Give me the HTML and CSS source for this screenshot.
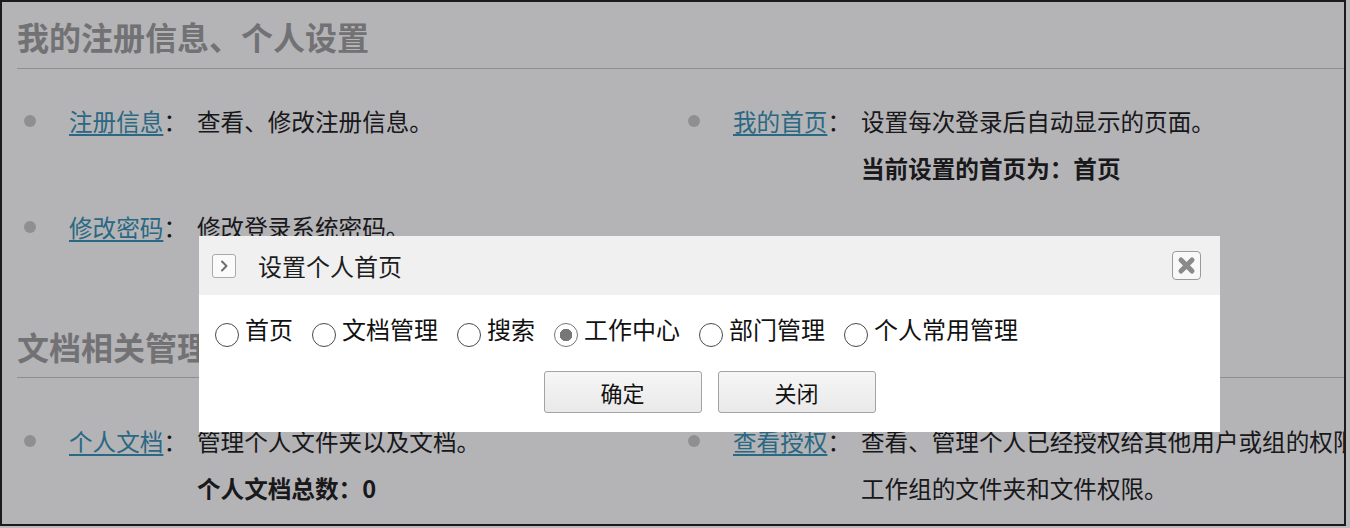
FILE: index.html
```html
<!DOCTYPE html>
<html lang="zh-CN">
<head>
    <meta charset="UTF-8">
    <meta name="viewport" content="width=device-width, initial-scale=1.0">
    <title>个人设置</title>
    <link rel="stylesheet" href="styles.css">
</head>
<body>
    <div class="screen">
        <div class="page">
            <div class="section">
                <h2 class="section-title">我的注册信息、个人设置</h2>
                <div class="items">
                    <div class="item">
                        <span class="dot"></span>
                        <span class="label"><a href="#">注册信息</a>：</span>
                        <div class="desc">
                            <p>查看、修改注册信息。</p>
                        </div>
                    </div>
                    <div class="item">
                        <span class="dot"></span>
                        <span class="label"><a href="#">我的首页</a>：</span>
                        <div class="desc">
                            <p>设置每次登录后自动显示的页面。</p>
                            <p class="strong">当前设置的首页为：首页</p>
                        </div>
                    </div>
                    <div class="item">
                        <span class="dot"></span>
                        <span class="label"><a href="#">修改密码</a>：</span>
                        <div class="desc">
                            <p>修改登录系统密码。</p>
                        </div>
                    </div>
                </div>
            </div>

            <div class="section section-docs">
                <h2 class="section-title">文档相关管理</h2>
                <div class="items items-docs">
                    <div class="item">
                        <span class="dot"></span>
                        <span class="label"><a href="#">个人文档</a>：</span>
                        <div class="desc">
                            <p>管理个人文件夹以及文档。</p>
                            <p class="strong">个人文档总数：0</p>
                        </div>
                    </div>
                    <div class="item">
                        <span class="dot"></span>
                        <span class="label"><a href="#">查看授权</a>：</span>
                        <div class="desc">
                            <p>查看、管理个人已经授权给其他用户或组的权限，</p>
                            <p>工作组的文件夹和文件权限。</p>
                        </div>
                    </div>
                </div>
            </div>
        </div>

        <div class="mask"></div>

        <div class="dialog">
            <div class="dialog-head">
                <span class="head-icon">
                    <svg width="22" height="22" viewBox="0 0 22 22"><path d="M9 6.5 L13.5 11 L9 15.5" fill="none" stroke="#6d6d6d" stroke-width="2" stroke-linecap="round" stroke-linejoin="round"/></svg>
                </span>
                <span class="dialog-title">设置个人首页</span>
                <span class="close-btn">
                    <svg width="27" height="27" viewBox="0 0 27 27"><path d="M8 8 L19 19 M19 8 L8 19" fill="none" stroke="#8a8a8a" stroke-width="5" stroke-linecap="round"/></svg>
                </span>
            </div>
            <div class="dialog-body">
                <div class="choices">
                    <label class="choice"><input type="radio" name="home">首页</label>
                    <label class="choice"><input type="radio" name="home">文档管理</label>
                    <label class="choice"><input type="radio" name="home">搜索</label>
                    <label class="choice"><input type="radio" name="home" checked>工作中心</label>
                    <label class="choice"><input type="radio" name="home">部门管理</label>
                    <label class="choice"><input type="radio" name="home">个人常用管理</label>
                </div>
                <div class="actions">
                    <button>确定</button>
                    <button>关闭</button>
                </div>
            </div>
        </div>
    </div>
</body>
</html>
```

FILE: styles.css
```css
html, body {
    margin: 0;
    padding: 0;
}
body {
    background-color: #b9babd;
    font-family: "Noto Sans CJK SC", "Microsoft YaHei", sans-serif;
    color: #222;
}
.screen {
    position: relative;
    width: 1342px;
    height: 522px;
    border: 2px solid #1b1b1b;
    background-color: #fff;
    overflow: hidden;
}
.page {
    padding: 12px 0 0 15px;
}
.section-title {
    margin: 0;
    padding-bottom: 10px;
    font-size: 32px;
    line-height: 44px;
    font-weight: 700;
    color: #a1a1a1;
    border-bottom: 1px solid #cbcbcb;
    width: 1400px;
}
.section-docs {
    margin-top: 73px;
}
.section-docs .section-title {
    padding-bottom: 9px;
}
.items {
    display: grid;
    grid-template-columns: 664px 664px;
    row-gap: 12px;
    margin-top: 29px;
}
.items-docs {
    margin-top: 40px;
}
.item {
    display: grid;
    grid-template-columns: 52px 128px 1fr;
    align-items: start;
    font-size: 23.6px;
    line-height: 47px;
}
.dot {
    width: 12px;
    height: 12px;
    margin: 17px 0 0 7px;
    border-radius: 50%;
    background-color: #cacaca;
}
.label a {
    color: #3a93b5;
    text-decoration: underline;
    text-underline-offset: 3px;
}
.desc p {
    margin: 0;
    white-space: nowrap;
}
.desc .strong {
    font-weight: 700;
}
.mask {
    position: absolute;
    inset: 0;
    background-color: rgba(5, 8, 18, 0.3);
}
.dialog {
    position: absolute;
    left: 197px;
    top: 234px;
    width: 1021px;
    height: 196px;
    background-color: #fff;
}
.dialog-head {
    display: flex;
    align-items: center;
    height: 59px;
    padding: 0 19px 0 13px;
    background-color: #f0f0f1;
}
.head-icon {
    display: flex;
    align-items: center;
    justify-content: center;
    width: 22px;
    height: 22px;
    border: 1px solid #aaa;
    border-radius: 3px;
    background-color: #fafafa;
}
.dialog-title {
    flex: 1;
    margin-left: 22px;
    font-size: 24px;
    color: #1d1d1d;
}
.close-btn {
    display: flex;
    align-items: center;
    justify-content: center;
    width: 27px;
    height: 27px;
    border: 1px solid #9a9a9a;
    border-radius: 4px;
    background-color: #f8f8f8;
}
.dialog-body {
    padding: 11px 16px 0;
}
.choices {
    display: flex;
    align-items: center;
    height: 44px;
    font-size: 24px;
    color: #111;
}
.choice {
    display: flex;
    align-items: center;
    margin-right: 19px;
}
.choice input {
    appearance: none;
    -webkit-appearance: none;
    width: 24px;
    height: 24px;
    margin: 14px 6px 0 0;
    border: 1.5px solid #4a4a4a;
    border-radius: 50%;
    background-color: #fff;
    box-sizing: border-box;
}
.choice input:checked {
    border-color: #777;
    background: radial-gradient(circle, #777 0 6px, #fff 6.5px);
}
.actions {
    display: flex;
    justify-content: center;
    gap: 16px;
    margin-top: 21px;
}
.actions button {
    width: 158px;
    height: 42px;
    font-family: inherit;
    font-size: 22px;
    color: #111;
    background: linear-gradient(#f6f6f6, #e9e9e9);
    border: 1px solid #a3a3a3;
    border-radius: 3px;
}
```
